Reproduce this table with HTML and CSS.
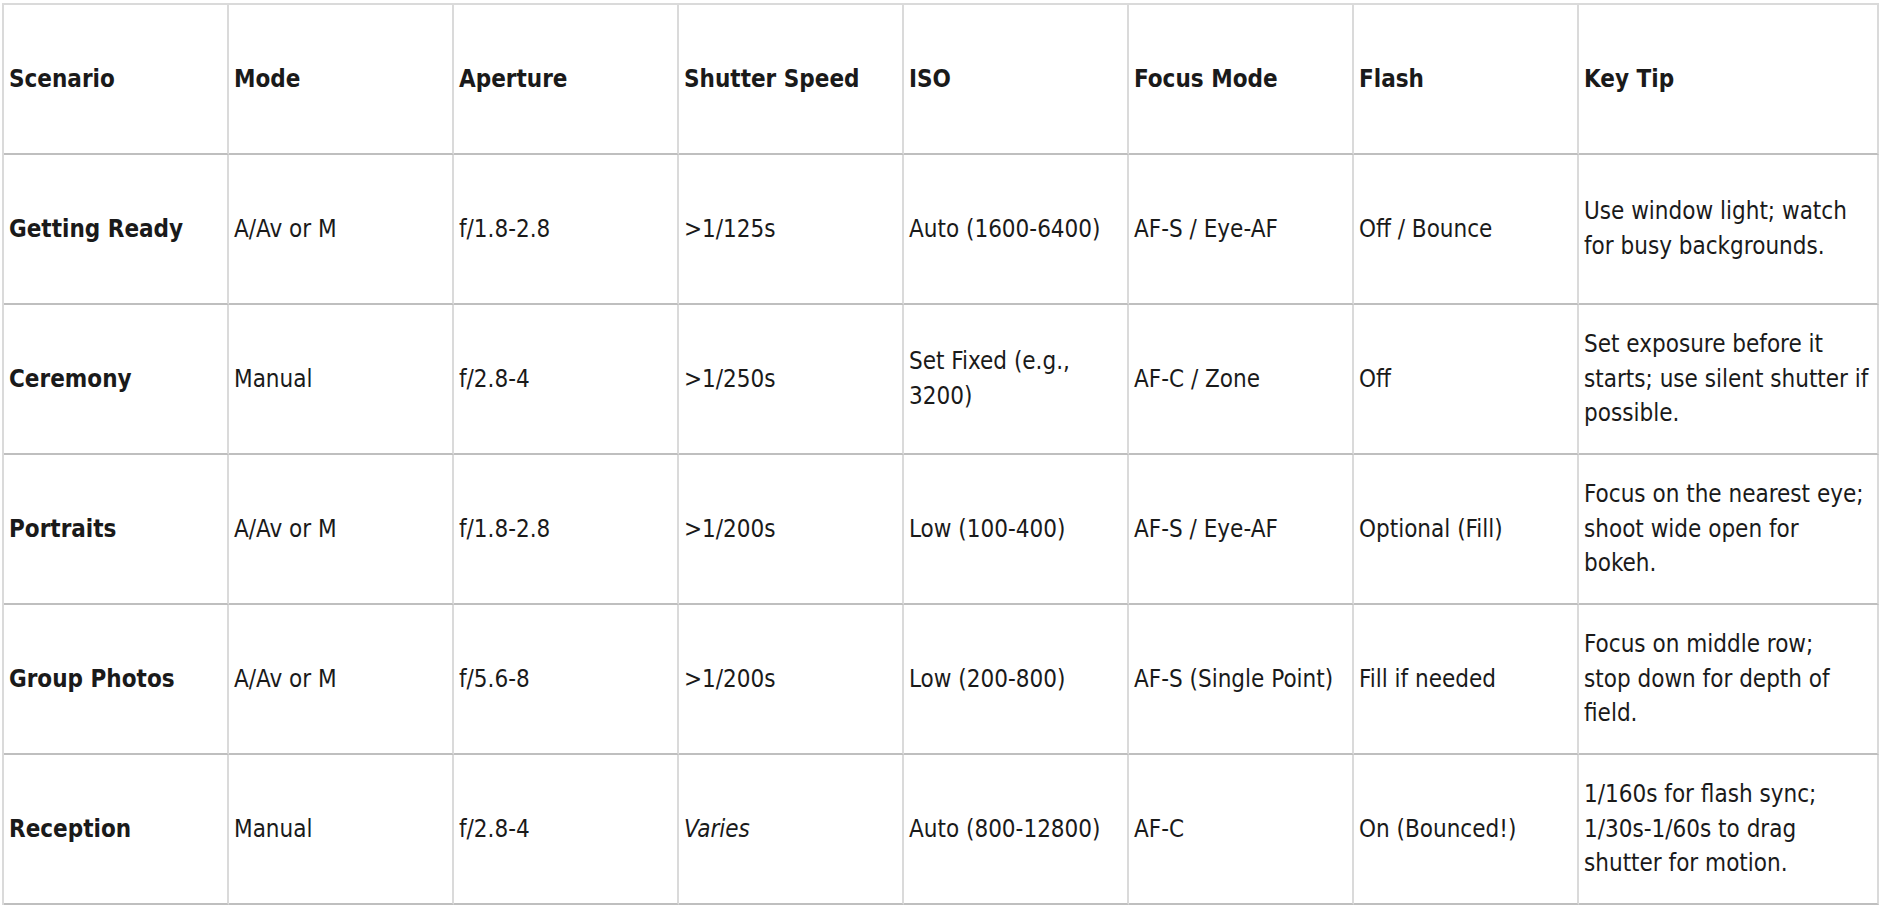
FILE: index.html
```html
<!DOCTYPE html>
<html lang="en">
<head>
<meta charset="utf-8">
<title>Wedding Camera Settings</title>
<link rel="stylesheet" href="styles.css">
</head>
<body>
<div class="sheet" role="table">
  <div class="cell head" role="columnheader">Scenario</div>
  <div class="cell head" role="columnheader">Mode</div>
  <div class="cell head" role="columnheader">Aperture</div>
  <div class="cell head" role="columnheader">Shutter Speed</div>
  <div class="cell head" role="columnheader">ISO</div>
  <div class="cell head" role="columnheader">Focus Mode</div>
  <div class="cell head" role="columnheader">Flash</div>
  <div class="cell head" role="columnheader">Key Tip</div>

  <div class="cell strong">Getting Ready</div>
  <div class="cell">A/Av or M</div>
  <div class="cell">f/1.8-2.8</div>
  <div class="cell">&gt;1/125s</div>
  <div class="cell">Auto (1600-6400)</div>
  <div class="cell">AF-S / Eye-AF</div>
  <div class="cell">Off / Bounce</div>
  <div class="cell">Use window light; watch for busy backgrounds.</div>

  <div class="cell strong">Ceremony</div>
  <div class="cell">Manual</div>
  <div class="cell">f/2.8-4</div>
  <div class="cell">&gt;1/250s</div>
  <div class="cell">Set Fixed (e.g., 3200)</div>
  <div class="cell">AF-C / Zone</div>
  <div class="cell">Off</div>
  <div class="cell">Set exposure before it starts; use silent shutter if possible.</div>

  <div class="cell strong">Portraits</div>
  <div class="cell">A/Av or M</div>
  <div class="cell">f/1.8-2.8</div>
  <div class="cell">&gt;1/200s</div>
  <div class="cell">Low (100-400)</div>
  <div class="cell">AF-S / Eye-AF</div>
  <div class="cell">Optional (Fill)</div>
  <div class="cell">Focus on the nearest eye; shoot wide open for bokeh.</div>

  <div class="cell strong">Group Photos</div>
  <div class="cell">A/Av or M</div>
  <div class="cell">f/5.6-8</div>
  <div class="cell">&gt;1/200s</div>
  <div class="cell">Low (200-800)</div>
  <div class="cell">AF-S (Single Point)</div>
  <div class="cell">Fill if needed</div>
  <div class="cell"><span>Focus on middle row;<br>stop down for depth of field.</span></div>

  <div class="cell strong">Reception</div>
  <div class="cell">Manual</div>
  <div class="cell">f/2.8-4</div>
  <div class="cell"><em>Varies</em></div>
  <div class="cell">Auto (800-12800)</div>
  <div class="cell">AF-C</div>
  <div class="cell">On (Bounced!)</div>
  <div class="cell">1/160s for flash sync; 1/30s-1/60s to drag shutter for motion.</div>
</div>
</body>
</html>
```
FILE: styles.css
```css
html, body {
  margin: 0;
  padding: 0;
  background: #ffffff;
}

body {
  font-family: "DejaVu Sans Condensed", "DejaVu Sans", sans-serif;
  font-stretch: condensed;
  font-size: 24px;
  line-height: 1.45;
  color: #1a1a1a;
}

.sheet {
  display: grid;
  grid-template-columns: repeat(7, 225px) 300px;
  grid-auto-rows: 150px;
  width: max-content;
  margin: 3px 0 0 2px;
  border-top: 2px solid #dadada;
  border-left: 2px solid #dadada;
}

.cell {
  box-sizing: border-box;
  display: flex;
  align-items: center;
  padding: 0 6px 0 5px;
  border-right: 2px solid #dadada;
  border-bottom: 2px solid #bfbfbf;
  overflow: hidden;
}

.head,
.strong {
  font-weight: bold;
}
```
